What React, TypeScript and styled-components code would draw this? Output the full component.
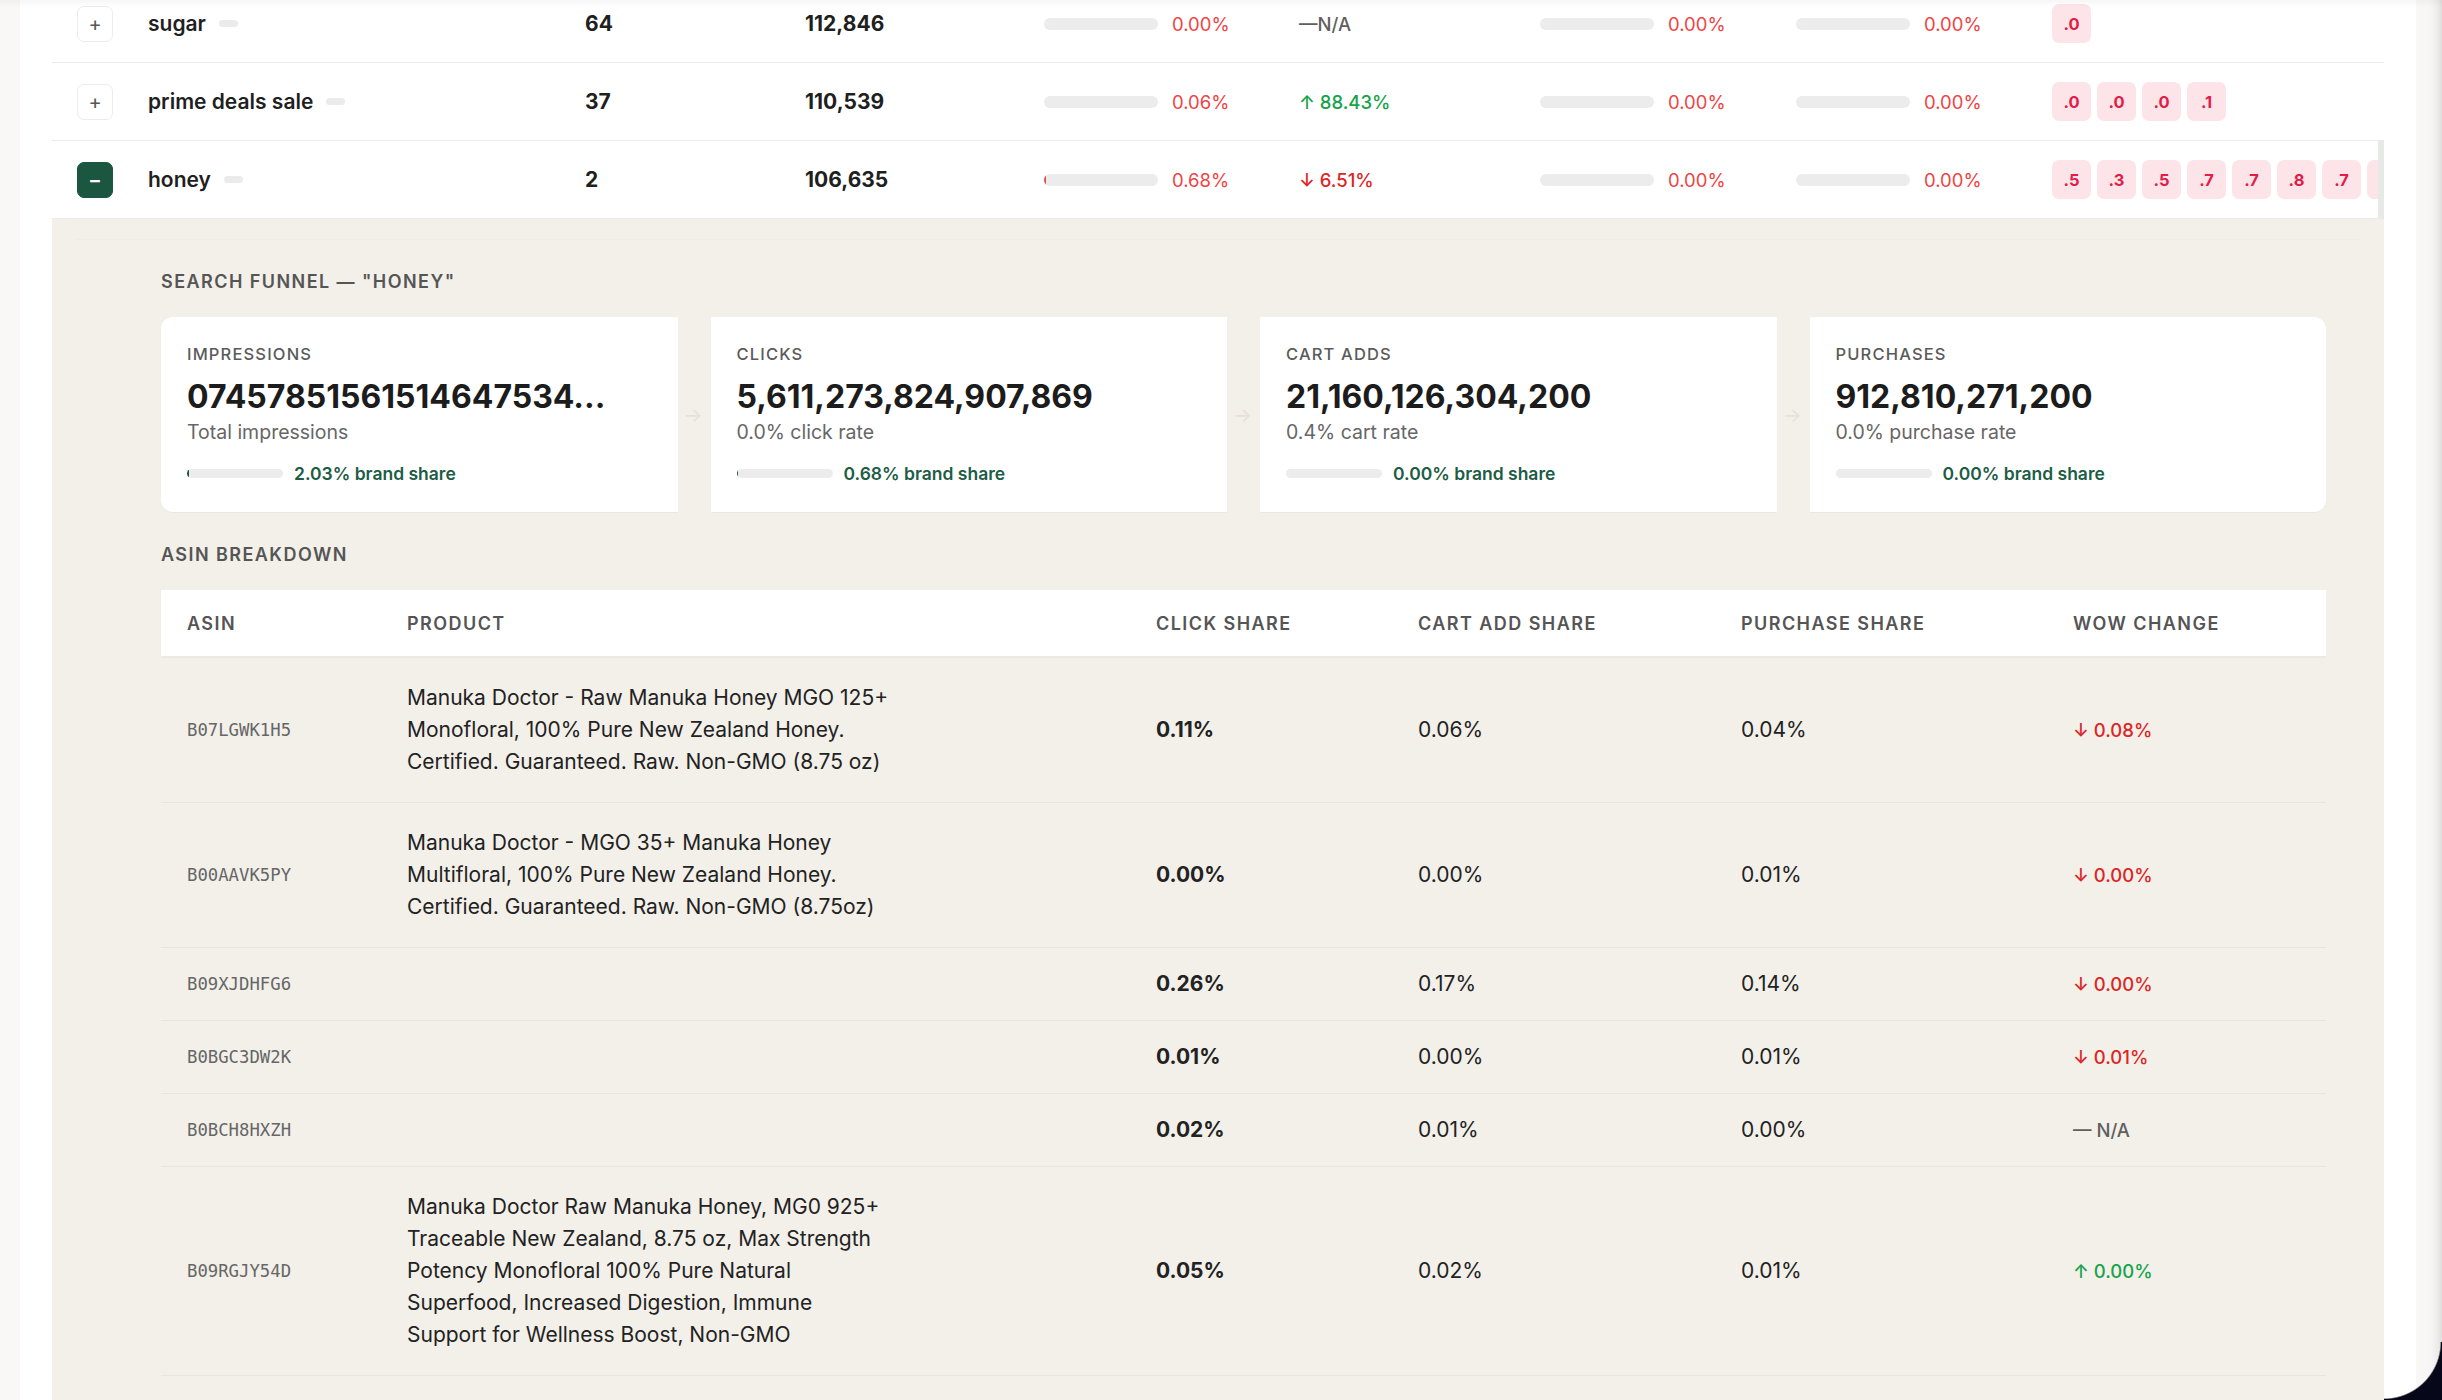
import React from 'react';
import styled, { createGlobalStyle, css } from 'styled-components';

const GlobalStyle = createGlobalStyle`
  html, body { margin: 0; padding: 0; }
  body {
    font-family: Inter, "Noto Sans", "Liberation Sans", sans-serif;
    background: #faf8f6;
    color: #1f1f1f;
    overflow: hidden;
    -webkit-font-smoothing: antialiased;
  }
`;

/* ---------- page frame ---------- */

const Frame = styled.div`
  display: flex;
  height: 1400px;
  overflow: hidden;
`;

const LeftRail = styled.div`
  flex: none;
  width: 20px;
  background: #faf8f6;
`;

const Main = styled.main`
  flex: 1;
  min-width: 0;
  background: #ffffff;
  padding: 0 32px;
  overflow: hidden;
`;

const RightRail = styled.div`
  flex: none;
  width: 26px;
  background: linear-gradient(to right, #f9f8f6 0%, #f7f6f4 55%, #ecebe9 85%, #dcdbd9 100%);
`;

const TopShade = styled.div`
  position: fixed;
  top: 0;
  left: 0;
  right: 0;
  height: 7px;
  background: linear-gradient(to bottom, rgba(0, 0, 0, 0.035), rgba(0, 0, 0, 0));
  pointer-events: none;
`;

const WindowCorner = styled.div`
  position: fixed;
  right: 0;
  bottom: 0;
  width: 58px;
  height: 58px;
  background: radial-gradient(circle at 0 0, transparent 56px, #07071a 57.5px);
  pointer-events: none;
`;

/* ---------- keyword rows ---------- */

const KeywordList = styled.div`
  margin-top: -15px;
`;

const KwRow = styled.div<{ $open?: boolean }>`
  display: grid;
  grid-template-columns: 71px 437px 220px 239px 255px 241px 256px 256px minmax(0, 1fr);
  align-items: center;
  height: 78px;
  box-sizing: border-box;
  padding-left: 25px;
  border-bottom: 1px solid #ebebeb;
  ${(p) =>
    p.$open &&
    css`
      border-right: 6px solid #e7e9e7;
    `}
`;

const Toggle = styled.button<{ $open?: boolean }>`
  width: 36px;
  height: 36px;
  padding: 0;
  border-radius: 7px;
  display: flex;
  align-items: center;
  justify-content: center;
  font-family: inherit;
  font-size: 20px;
  line-height: 1;
  cursor: pointer;
  border: 1px solid #ececec;
  background: #ffffff;
  color: #555;
  ${(p) =>
    p.$open &&
    css`
      border-color: #1b5641;
      background: #1b5641;
      color: #ffffff;
      font-weight: 600;
    `}
`;

const KwCell = styled.div`
  display: flex;
  align-items: center;
  gap: 13px;
  font-size: 21px;
  font-weight: 600;
  color: #1f1f1f;
`;

const KwPill = styled.span`
  width: 19px;
  height: 7px;
  border-radius: 4px;
  background: #ebebeb;
`;

const NumCell = styled.div`
  font-size: 21px;
  font-weight: 700;
  color: #1f1f1f;
`;

const ShareCell = styled.div`
  display: flex;
  align-items: center;
  gap: 14px;
`;

const Track = styled.div<{ $w: number; $h: number }>`
  position: relative;
  width: ${(p) => p.$w}px;
  height: ${(p) => p.$h}px;
  border-radius: ${(p) => p.$h}px;
  background: #ececec;
  overflow: hidden;
`;

const Fill = styled.div<{ $color: string }>`
  height: 100%;
  background: ${(p) => p.$color};
`;

const SharePct = styled.span`
  font-size: 18.5px;
  color: #ef4444;
`;

type Dir = 'up' | 'down' | 'none';

const Change = styled.span<{ $dir: Dir }>`
  font-size: 18.5px;
  font-weight: 500;
  white-space: nowrap;
  color: ${(p) => (p.$dir === 'up' ? '#16a34a' : p.$dir === 'down' ? '#dc2626' : '#5f5f5f')};
`;

const BadgeStrip = styled.div`
  display: flex;
  gap: 6px;
  overflow: hidden;
`;

const Badge = styled.span`
  flex: none;
  width: 39px;
  height: 39px;
  border-radius: 7px;
  background: #fde4e8;
  color: #e11d48;
  font-size: 16.5px;
  font-weight: 700;
  display: flex;
  align-items: center;
  justify-content: center;
`;

/* ---------- expanded detail ---------- */

const Detail = styled.section`
  background: #f3f0ea;
  padding: 20px 24px 60px;
`;

const Rule = styled.div`
  height: 1px;
  background: #efece7;
`;

const DetailBody = styled.div`
  padding: 31px 34px 0 85px;
`;

const SectionTitle = styled.h3<{ $gapTop?: number }>`
  margin: ${(p) => p.$gapTop ?? 0}px 0 24px;
  font-size: 18px;
  line-height: 22px;
  font-weight: 600;
  letter-spacing: 0.08em;
  text-transform: uppercase;
  color: #555555;
`;

const Funnel = styled.div`
  display: grid;
  grid-template-columns: repeat(4, minmax(0, 1fr));
  gap: 33px;
`;

const StageCard = styled.div`
  position: relative;
  background: #ffffff;
  padding: 27px 27px 29px 26px;
  box-shadow: 0 1px 0 rgba(0, 0, 0, 0.03);
  &:first-child {
    border-radius: 12px 0 0 12px;
  }
  &:last-child {
    border-radius: 0 12px 12px 0;
  }
  &:not(:last-child)::after {
    content: '→';
    position: absolute;
    right: -25px;
    top: 50%;
    transform: translateY(-50%);
    font-size: 20px;
    color: #e6e2db;
  }
`;

const StageLabel = styled.div`
  font-size: 16.5px;
  line-height: 20px;
  font-weight: 500;
  letter-spacing: 0.07em;
  text-transform: uppercase;
  color: #5a5a5a;
`;

const StageValue = styled.div`
  margin-top: 13px;
  font-size: 32px;
  line-height: 39px;
  font-weight: 700;
  color: #1c1c1c;
  white-space: nowrap;
  overflow: hidden;
  text-overflow: ellipsis;
`;

const StageSub = styled.div`
  margin-top: 4px;
  font-size: 19.5px;
  line-height: 24px;
  color: #666666;
`;

const BrandRow = styled.div`
  margin-top: 19px;
  display: flex;
  align-items: center;
  gap: 11px;
  height: 20px;
`;

const BrandText = styled.span`
  font-size: 17.5px;
  font-weight: 600;
  color: #1d5c45;
`;

const AsinTable = styled.div`
  display: flex;
  flex-direction: column;
`;

const asinColumns = '220px 749px 262px 323px 332px minmax(0, 1fr)';

const AsinHead = styled.div`
  display: grid;
  grid-template-columns: ${asinColumns};
  align-items: center;
  height: 68px;
  box-sizing: border-box;
  background: #ffffff;
  border-bottom: 2px solid #ebe9e4;
`;

const HeadCell = styled.div`
  padding: 0 26px;
  font-size: 18px;
  font-weight: 600;
  letter-spacing: 0.08em;
  text-transform: uppercase;
  color: #555555;
`;

const AsinRow = styled.div`
  display: grid;
  grid-template-columns: ${asinColumns};
  align-items: center;
  padding: 24px 0;
  border-bottom: 1px solid #e9e5de;
`;

const Cell = styled.div`
  padding: 0 26px;
  min-height: 24px;
  display: flex;
  align-items: center;
`;

const AsinCode = styled.span`
  font-family: "DejaVu Sans Mono", "Liberation Mono", monospace;
  font-size: 17.3px;
  line-height: 24px;
  color: #666666;
`;

const ProductName = styled.span`
  max-width: 486px;
  font-size: 21px;
  line-height: 32px;
  color: #222222;
`;

const Metric = styled.span<{ $strong?: boolean }>`
  font-size: 21px;
  line-height: 24px;
  font-weight: ${(p) => (p.$strong ? 700 : 400)};
  color: #222222;
`;

/* ---------- data ---------- */

type Keyword = {
  kw: string;
  count: string;
  volume: string;
  clickShare: number;
  change: { dir: Dir; text: string };
  cartShare: number;
  purchaseShare: number;
  weeks: string[];
  open?: boolean;
};

const keywords: Keyword[] = [
  {
    kw: 'sugar',
    count: '64',
    volume: '112,846',
    clickShare: 0,
    change: { dir: 'none', text: '—N/A' },
    cartShare: 0,
    purchaseShare: 0,
    weeks: ['.0'],
  },
  {
    kw: 'prime deals sale',
    count: '37',
    volume: '110,539',
    clickShare: 0.06,
    change: { dir: 'up', text: '↑ 88.43%' },
    cartShare: 0,
    purchaseShare: 0,
    weeks: ['.0', '.0', '.0', '.1'],
  },
  {
    kw: 'honey',
    count: '2',
    volume: '106,635',
    clickShare: 0.68,
    change: { dir: 'down', text: '↓ 6.51%' },
    cartShare: 0,
    purchaseShare: 0,
    weeks: ['.5', '.3', '.5', '.7', '.7', '.8', '.7', '.7', '.6', '.5'],
    open: true,
  },
];

const stages = [
  { label: 'Impressions', value: '07457851561514647534...', sub: 'Total impressions', brand: 2.03 },
  { label: 'Clicks', value: '5,611,273,824,907,869', sub: '0.0% click rate', brand: 0.68 },
  { label: 'Cart Adds', value: '21,160,126,304,200', sub: '0.4% cart rate', brand: 0 },
  { label: 'Purchases', value: '912,810,271,200', sub: '0.0% purchase rate', brand: 0 },
];

type AsinLine = {
  asin: string;
  product: string;
  click: string;
  cart: string;
  purchase: string;
  wow: { dir: Dir; text: string };
};

const asins: AsinLine[] = [
  {
    asin: 'B07LGWK1H5',
    product:
      'Manuka Doctor - Raw Manuka Honey MGO 125+ Monofloral, 100% Pure New Zealand Honey. Certified. Guaranteed. Raw. Non-GMO (8.75 oz)',
    click: '0.11%',
    cart: '0.06%',
    purchase: '0.04%',
    wow: { dir: 'down', text: '↓ 0.08%' },
  },
  {
    asin: 'B00AAVK5PY',
    product:
      'Manuka Doctor - MGO 35+ Manuka Honey Multifloral, 100% Pure New Zealand Honey. Certified. Guaranteed. Raw. Non-GMO (8.75oz)',
    click: '0.00%',
    cart: '0.00%',
    purchase: '0.01%',
    wow: { dir: 'down', text: '↓ 0.00%' },
  },
  { asin: 'B09XJDHFG6', product: '', click: '0.26%', cart: '0.17%', purchase: '0.14%', wow: { dir: 'down', text: '↓ 0.00%' } },
  { asin: 'B0BGC3DW2K', product: '', click: '0.01%', cart: '0.00%', purchase: '0.01%', wow: { dir: 'down', text: '↓ 0.01%' } },
  { asin: 'B0BCH8HXZH', product: '', click: '0.02%', cart: '0.01%', purchase: '0.00%', wow: { dir: 'none', text: '— N/A' } },
  {
    asin: 'B09RGJY54D',
    product:
      'Manuka Doctor Raw Manuka Honey, MG0 925+ Traceable New Zealand, 8.75 oz, Max Strength Potency Monofloral 100% Pure Natural Superfood, Increased Digestion, Immune Support for Wellness Boost, Non-GMO',
    click: '0.05%',
    cart: '0.02%',
    purchase: '0.01%',
    wow: { dir: 'up', text: '↑ 0.00%' },
  },
];

/* ---------- pieces ---------- */

const TRACK_W = 114;

const ShareBar: React.FC<{ pct: number }> = ({ pct }) => (
  <ShareCell>
    <Track $w={TRACK_W} $h={12}>
      <Fill $color="#ef4444" style={{ width: `${Math.floor((pct * 3 * TRACK_W) / 100)}px` }} />
    </Track>
    <SharePct>{pct.toFixed(2)}%</SharePct>
  </ShareCell>
);

const KeywordRow: React.FC<{ k: Keyword }> = ({ k }) => (
  <KwRow $open={k.open}>
    <Toggle $open={k.open}>{k.open ? '−' : '+'}</Toggle>
    <KwCell>
      {k.kw}
      <KwPill />
    </KwCell>
    <NumCell>{k.count}</NumCell>
    <NumCell>{k.volume}</NumCell>
    <ShareBar pct={k.clickShare} />
    <div>
      <Change $dir={k.change.dir}>{k.change.text}</Change>
    </div>
    <ShareBar pct={k.cartShare} />
    <ShareBar pct={k.purchaseShare} />
    <BadgeStrip>
      {k.weeks.map((w, i) => (
        <Badge key={i}>{w}</Badge>
      ))}
    </BadgeStrip>
  </KwRow>
);

const HoneyDetail: React.FC = () => (
  <Detail>
    <Rule />
    <DetailBody>
      <SectionTitle>Search Funnel — "honey"</SectionTitle>
      <Funnel>
        {stages.map((s) => (
          <StageCard key={s.label}>
            <StageLabel>{s.label}</StageLabel>
            <StageValue>{s.value}</StageValue>
            <StageSub>{s.sub}</StageSub>
            <BrandRow>
              <Track $w={96} $h={9}>
                <Fill $color="#1b5641" style={{ width: `${s.brand}%` }} />
              </Track>
              <BrandText>{s.brand.toFixed(2)}% brand share</BrandText>
            </BrandRow>
          </StageCard>
        ))}
      </Funnel>

      <SectionTitle $gapTop={32}>ASIN Breakdown</SectionTitle>
      <AsinTable>
        <AsinHead>
          <HeadCell>ASIN</HeadCell>
          <HeadCell>Product</HeadCell>
          <HeadCell>Click Share</HeadCell>
          <HeadCell>Cart Add Share</HeadCell>
          <HeadCell>Purchase Share</HeadCell>
          <HeadCell>WoW Change</HeadCell>
        </AsinHead>
        {asins.map((a) => (
          <AsinRow key={a.asin}>
            <Cell>
              <AsinCode>{a.asin}</AsinCode>
            </Cell>
            <Cell>{a.product && <ProductName>{a.product}</ProductName>}</Cell>
            <Cell>
              <Metric $strong>{a.click}</Metric>
            </Cell>
            <Cell>
              <Metric>{a.cart}</Metric>
            </Cell>
            <Cell>
              <Metric>{a.purchase}</Metric>
            </Cell>
            <Cell>
              <Change $dir={a.wow.dir}>{a.wow.text}</Change>
            </Cell>
          </AsinRow>
        ))}
      </AsinTable>
    </DetailBody>
  </Detail>
);

export default function App() {
  return (
    <>
      <GlobalStyle />
      <Frame>
        <LeftRail />
        <Main>
          <KeywordList>
            {keywords.map((k) => (
              <React.Fragment key={k.kw}>
                <KeywordRow k={k} />
                {k.open && <HoneyDetail />}
              </React.Fragment>
            ))}
          </KeywordList>
        </Main>
        <RightRail />
      </Frame>
      <TopShade />
      <WindowCorner />
    </>
  );
}
